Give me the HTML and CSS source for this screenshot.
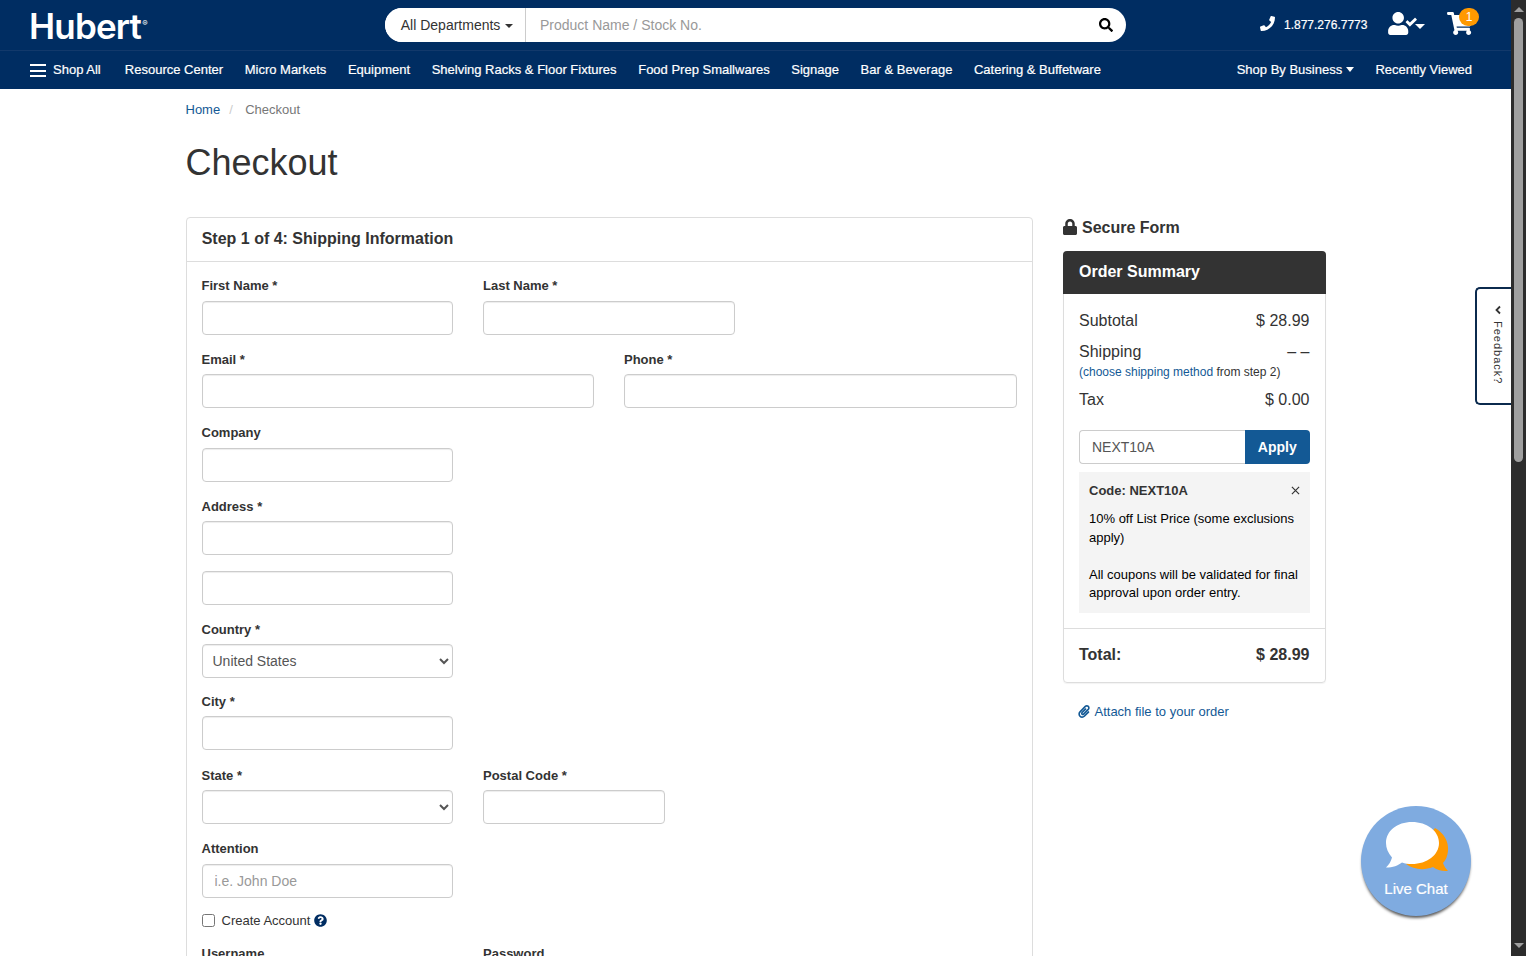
FILE: index.html
```html
<!DOCTYPE html>
<html lang="en">
<head>
    <meta charset="UTF-8">
    <meta name="viewport" content="width=device-width, initial-scale=1.0">
    <title>Checkout | Hubert</title>
    <link rel="stylesheet" href="styles.css">
</head>
<body>
    <div class="page">
        <header>
            <div class="top-bar">
                <a class="logo">Hubert<sup>&reg;</sup></a>
                <div class="search">
                    <button class="departments">All Departments <span class="caret"></span></button>
                    <input type="text" class="search-input" placeholder="Product Name / Stock No.">
                    <svg class="icon-search" viewBox="0 0 512 512"><path d="M505 442.7L405.3 343c-4.5-4.5-10.6-7-17-7H372c27.6-35.3 44-79.7 44-128C416 93.1 322.9 0 208 0S0 93.1 0 208s93.1 208 208 208c48.3 0 92.7-16.4 128-44v16.3c0 6.4 2.5 12.5 7 17l99.7 99.7c9.4 9.4 24.6 9.4 33.9 0l28.3-28.3c9.4-9.4 9.4-24.6.1-34zM208 336c-70.7 0-128-57.2-128-128 0-70.7 57.2-128 128-128 70.7 0 128 57.2 128 128 0 70.7-57.2 128-128 128z"/></svg>
                </div>
                <div class="tools">
                    <svg class="icon-phone" viewBox="0 0 512 512"><path d="M493.4 24.6l-104-24c-11.3-2.6-22.9 3.3-27.5 13.9l-48 112c-4.2 9.8-1.4 21.3 6.9 28l60.6 49.6c-36 76.7-98.9 140.5-177.2 177.2l-49.6-60.6c-6.8-8.3-18.2-11.1-28-6.9l-112 48C3.9 366.500-2 378.1.6 389.4l24 104C27.1 504.2 36.7 512 48 512c256.1 0 464-207.500 464-464 0-11.2-7.7-20.9-18.6-23.4z"/></svg>
                    <span class="phone">1.877.276.7773</span>
                    <svg class="icon-user" viewBox="0 0 640 512"><path d="M224 256c70.7 0 128-57.3 128-128S294.7 0 224 0 96 57.3 96 128s57.3 128 128 128zm89.6 32h-16.7c-22.2 10.2-46.9 16-72.9 16s-50.6-5.8-72.9-16h-16.7C60.2 288 0 348.2 0 422.4V464c0 26.5 21.5 48 48 48h352c26.5 0 48-21.5 48-48v-41.6c0-74.2-60.2-134.4-134.4-134.4z"/><path d="M636 159l-28-28c-5-5-12-5-17 0L485 236l-46-46c-5-5-12-5-17 0l-28 28c-5 5-5 12 0 17l82 83c5 5 12 5 17 0l143-142c5-5 5-12 0-17z"/></svg>
                    <span class="caret caret-user"></span>
                    <a class="cart">
                        <svg class="icon-cart" viewBox="0 0 576 512"><path d="M528.12 301.319l47.273-208C578.806 78.301 567.391 64 551.99 64H159.208l-9.166-44.81C147.758 8.021 137.93 0 126.529 0H24C10.745 0 0 10.745 0 24v16c0 13.255 10.745 24 24 24h69.883l70.248 343.435C147.325 417.1 136 435.222 136 456c0 30.928 25.072 56 56 56s56-25.072 56-56c0-15.674-6.447-29.835-16.824-40h209.647C430.447 426.165 424 440.326 424 456c0 30.928 25.072 56 56 56s56-25.072 56-56c0-22.172-12.888-41.332-31.579-50.405l5.517-24.276c3.413-15.018-8.002-29.319-23.403-29.319H218.117l-6.545-32h293.145c11.206 0 20.92-7.754 23.403-18.681z"/></svg>
                        <span class="badge">1</span>
                    </a>
                </div>
            </div>
            <nav>
                <a class="shop-all"><span class="burger"></span>Shop All</a>
                <a>Resource Center</a>
                <a>Micro Markets</a>
                <a>Equipment</a>
                <a>Shelving Racks &amp; Floor Fixtures</a>
                <a>Food Prep Smallwares</a>
                <a>Signage</a>
                <a>Bar &amp; Beverage</a>
                <a>Catering &amp; Buffetware</a>
                <a class="nav-right">Shop By Business <span class="caret caret-nav"></span></a>
                <a>Recently Viewed</a>
            </nav>
        </header>

        <div class="container">
            <div class="breadcrumb"><a>Home</a><span class="sep">/</span><span>Checkout</span></div>
            <h1>Checkout</h1>

            <div class="columns">
                <form class="panel">
                    <h2>Step 1 of 4: Shipping Information</h2>
                    <div class="panel-body">
                        <div class="row">
                            <div class="group third"><label>First Name *</label><input type="text"></div>
                            <div class="group third"><label>Last Name *</label><input type="text"></div>
                        </div>
                        <div class="row">
                            <div class="group half"><label>Email *</label><input type="text"></div>
                            <div class="group half"><label>Phone *</label><input type="text"></div>
                        </div>
                        <div class="row">
                            <div class="group third"><label>Company</label><input type="text"></div>
                        </div>
                        <div class="row">
                            <div class="group third"><label>Address *</label><input type="text"></div>
                        </div>
                        <div class="row">
                            <div class="group third"><input type="text"></div>
                        </div>
                        <div class="row row-country">
                            <div class="group third"><label>Country *</label><select><option>United States</option></select></div>
                        </div>
                        <div class="row row-city">
                            <div class="group third"><label>City *</label><input type="text"></div>
                        </div>
                        <div class="row">
                            <div class="group third"><label>State *</label><select><option></option></select></div>
                            <div class="group postal"><label>Postal Code *</label><input type="text"></div>
                        </div>
                        <div class="row">
                            <div class="group third"><label>Attention</label><input type="text" placeholder="i.e. John Doe"></div>
                        </div>
                        <div class="create">
                            <input type="checkbox" id="create"><label for="create">Create Account</label>
                            <svg class="icon-help" viewBox="0 0 512 512"><path d="M504 256c0 136.997-111.043 248-248 248S8 392.997 8 256C8 119.083 119.043 8 256 8s248 111.083 248 248zM262.655 90c-54.497 0-89.255 22.957-116.549 63.758-3.536 5.286-2.353 12.415 2.715 16.258l34.699 26.31c5.205 3.947 12.621 3.008 16.665-2.122 17.864-22.658 30.113-35.797 57.303-35.797 20.429 0 45.698 13.148 45.698 32.958 0 14.976-12.363 22.667-32.534 33.976C247.128 238.528 216 254.941 216 296v4c0 6.627 5.373 12 12 12h56c6.627 0 12-5.373 12-12v-1.333c0-28.462 83.186-29.647 83.186-106.667 0-58.002-60.165-102-116.531-102zM256 338c-25.365 0-46 20.635-46 46 0 25.364 20.635 46 46 46s46-20.636 46-46c0-25.365-20.635-46-46-46z"/></svg>
                        </div>
                        <div class="row">
                            <div class="group third"><label>Username</label><input type="text"></div>
                            <div class="group third"><label>Password</label><input type="password"></div>
                        </div>
                    </div>
                </form>

                <aside>
                    <div class="secure">
                        <svg class="icon-lock" viewBox="0 0 448 512"><path d="M400 224h-24v-72C376 68.2 307.8 0 224 0S72 68.2 72 152v72H48c-26.5 0-48 21.5-48 48v192c0 26.5 21.5 48 48 48h352c26.5 0 48-21.5 48-48V272c0-26.5-21.5-48-48-48zm-104 0H152v-72c0-39.7 32.3-72 72-72s72 32.3 72 72v72z"/></svg>
                        Secure Form
                    </div>
                    <div class="summary">
                        <h3>Order Summary</h3>
                        <div class="summary-body">
                            <div class="line"><span>Subtotal</span><span>$ 28.99</span></div>
                            <div class="line line-shipping"><span>Shipping</span><span>&ndash; &ndash;</span></div>
                            <div class="note"><a>(choose shipping method</a> from step 2)</div>
                            <div class="line"><span>Tax</span><span>$ 0.00</span></div>
                            <div class="promo">
                                <input type="text" value="NEXT10A">
                                <button>Apply</button>
                            </div>
                            <div class="coupon">
                                <div class="coupon-head"><span>Code: NEXT10A</span>
                                    <svg class="icon-close" viewBox="0 0 10 10"><path d="M1 1l8 8M9 1l-8 8"/></svg>
                                </div>
                                <p>10% off List Price (some exclusions apply)</p>
                                <p>All coupons will be validated for final approval upon order entry.</p>
                            </div>
                        </div>
                        <div class="total"><span>Total:</span><span>$ 28.99</span></div>
                    </div>
                    <a class="attach">
                        <svg class="icon-clip" viewBox="0 0 448 512"><path d="M43.246 466.142c-58.43-60.289-57.341-157.511 1.386-217.581L254.392 34c44.316-45.332 116.351-45.336 160.671 0 43.89 44.894 43.943 117.329 0 162.276L232.214 383.128c-29.855 30.537-78.633 30.111-107.982-.998-28.275-29.97-27.368-77.473 1.452-106.953l143.743-146.835c6.182-6.314 16.312-6.422 22.626-.241l22.861 22.379c6.315 6.182 6.422 16.312.241 22.626L171.427 319.927c-4.932 5.045-5.236 13.428-.648 18.292 4.372 4.634 11.245 4.711 15.688.165l182.849-186.851c19.613-20.062 19.613-52.725-.011-72.798-19.189-19.627-49.957-19.637-69.154 0L90.39 293.295c-34.763 35.56-35.299 93.12-1.191 128.313 34.01 35.093 88.985 35.137 123.058.286l172.06-175.999c6.177-6.319 16.307-6.433 22.626-.256l22.877 22.364c6.319 6.177 6.434 16.307.256 22.626l-172.06 175.998c-59.576 60.938-155.943 60.216-214.77-.485z"/></svg>
                        Attach file to your order
                    </a>
                </aside>
            </div>
        </div>

        <div class="feedback">
            <svg class="icon-chevron" viewBox="0 0 8 10"><path d="M6 1.500L2.500 5 6 8.500"/></svg>
            <span>Feedback?</span>
        </div>

        <div class="chat">
            <svg class="icon-chat" viewBox="0 0 64 52">
                <path class="bubble-back" d="M50 7c9 5 14 14 13 23-.5 5-2 9-5 12 1 3 3 6 5 8-6 .5-11-1-15-4-10 4-20 2-27-3z"/>
                <path class="bubble-front" d="M27 1c15 0 27 9 27 21S42 43 27 43c-4 0-7-.5-10-1.500-4 3-9 5-16 5 3-3 5-6 6-10C3 32 1 27 1 22 1 10 12 1 27 1z"/>
            </svg>
            <span>Live Chat</span>
        </div>
    </div>

    <div class="scrollbar">
        <span class="arrow-up"></span>
        <div class="thumb"></div>
        <span class="arrow-down"></span>
    </div>
</body>
</html>
```
FILE: styles.css
```css
* {
    box-sizing: border-box;
}
body {
    margin: 0;
    display: flex;
    height: 956px;
    overflow: hidden;
    background: #fff;
    color: #333;
    font-family: "Liberation Sans", Arial, sans-serif;
    font-size: 13px;
    line-height: 18.4px;
}
a {
    color: #135995;
    text-decoration: none;
}
svg {
    display: block;
    flex-shrink: 0;
    fill: currentColor;
}
input, select, button {
    font-family: inherit;
}
.page {
    position: relative;
    width: 1511px;
    height: 956px;
    overflow: hidden;
}

/* Header */
header {
    height: 89px;
    background: #002d62;
    color: #fff;
}
.top-bar {
    display: flex;
    align-items: center;
    height: 51px;
    padding: 0 32px 0 29px;
    border-bottom: 1px solid #12396b;
}
.logo {
    display: flex;
    width: 356px;
    padding-top: 2px;
    color: #fff;
    font-family: Inter, sans-serif;
    font-size: 35px;
    font-weight: 600;
    line-height: 40px;
    letter-spacing: -0.8px;
}
.logo sup {
    margin-left: 1px;
    font-size: 8px;
    font-weight: 400;
    line-height: 34px;
    letter-spacing: 0;
}
.search {
    display: flex;
    align-items: center;
    width: 741px;
    height: 34px;
    padding-right: 13px;
    border-radius: 17px;
    background: #fff;
    overflow: hidden;
}
.departments {
    width: 141px;
    height: 34px;
    padding: 0 0 0 4px;
    border: 0;
    border-right: 1px solid #ccc;
    background: #fff;
    color: #333;
    font-size: 14px;
}
.caret {
    display: inline-block;
    margin-left: 1px;
    border: 4px solid transparent;
    border-top-color: currentColor;
    border-bottom: 0;
    vertical-align: middle;
}
.caret-nav {
    margin: -3px 0 0;
    border-width: 5px 4.5px 0;
}
.search-input {
    flex: 1;
    padding: 0 14px;
    border: 0;
    font-size: 14px;
}
input::placeholder {
    color: #999;
}
.icon-search {
    width: 14px;
    height: 14px;
    margin-bottom: 1px;
    color: #000;
}
.tools {
    display: flex;
    align-items: center;
    margin-left: auto;
}
.icon-phone {
    width: 15px;
    height: 15px;
    margin: 0 9px 3px 0;
}
.phone {
    width: 104px;
    font-size: 12px;
    -webkit-text-stroke: 0.2px #fff;
}
.icon-user {
    width: 29px;
    height: 23px;
    margin-bottom: 3px;
}
.caret-user {
    margin: 3px 22px 0 -2px;
    border-width: 5px 5px 0;
}
.cart {
    position: relative;
    width: 32px;
    height: 24px;
    color: #fff;
}
.icon-cart {
    width: 26px;
    height: 23px;
    margin-top: -1px;
}
.badge {
    position: absolute;
    top: -5px;
    right: 0;
    width: 20px;
    height: 18px;
    border-radius: 9px;
    background: #f90;
    font-size: 12px;
    line-height: 18px;
    text-align: center;
}
nav {
    display: flex;
    align-items: center;
    gap: 21.6px;
    height: 38px;
    padding: 1px 39px 0 30px;
}
nav a {
    color: #fff;
    white-space: nowrap;
    -webkit-text-stroke: 0.2px #fff;
}
.shop-all {
    display: flex;
    align-items: center;
    margin-right: 2.5px;
}
.burger {
    width: 16px;
    height: 13px;
    margin-right: 7px;
    border-top: 2px solid #fff;
    border-bottom: 2px solid #fff;
    background: linear-gradient(#fff, #fff) center / 16px 2px no-repeat;
}
.nav-right {
    margin-left: auto;
}

/* Checkout */
.container {
    width: 1140px;
    margin: 0 auto;
}
.breadcrumb {
    display: flex;
    padding-top: 12px;
    color: #777;
}
.sep {
    width: 25px;
    padding-left: 9px;
    color: #ccc;
}
h1 {
    margin: 23px 0 34px;
    font-size: 36px;
    font-weight: 400;
    line-height: 41px;
}
.columns {
    display: flex;
    gap: 30px;
    align-items: flex-start;
}
.panel {
    width: 847.5px;
    border: 1px solid #ddd;
    border-radius: 4px;
}
.panel h2 {
    height: 44px;
    margin: 0;
    padding: 12px 15.2px 0;
    border-bottom: 1px solid #ddd;
    font-size: 16px;
    line-height: 18px;
}
.panel-body {
    padding: 15px;
}
.row {
    display: flex;
    gap: 30px;
    margin-bottom: 16px;
}
.row-country {
    margin-bottom: 14.4px;
}
.row-city {
    margin-bottom: 16.6px;
}
.third {
    width: 251.5px;
}
.half {
    width: 392.5px;
}
.postal {
    width: 182px;
}
.group label {
    display: block;
    margin-bottom: 5px;
    font-weight: bold;
}
.group input, .group select {
    display: block;
    width: 100%;
    height: 34px;
    padding: 6px 12px;
    border: 1px solid #ccc;
    border-radius: 4px;
    background: #fff;
    box-shadow: inset 0 1px 1px rgba(0, 0, 0, 0.075);
    color: #555;
    font-size: 14px;
}
.group select {
    padding: 6px;
}
.create {
    display: flex;
    align-items: center;
    height: 18px;
    margin: -1.2px 0 15px;
}
.create input {
    width: 13px;
    height: 13px;
    margin: 0 7px 2px 0;
}
.icon-help {
    width: 13px;
    height: 13px;
    margin: 0 0 2px 4px;
    color: #002d62;
}

/* Order summary */
aside {
    width: 262.5px;
}
.secure {
    display: flex;
    align-items: center;
    gap: 5px;
    height: 20px;
    margin: 1px 0 13px;
    font-size: 16px;
    font-weight: bold;
}
.icon-lock {
    width: 14px;
    height: 16px;
    margin-bottom: 2px;
}
.summary {
    border: 1px solid #ddd;
    border-radius: 4px;
    box-shadow: 0 1px 1px rgba(0, 0, 0, 0.05);
}
.summary h3 {
    height: 43px;
    margin: -1px -1px 0;
    padding: 12px 16px;
    border-radius: 4px 4px 0 0;
    background: #333;
    color: #fff;
    font-size: 16px;
}
.summary-body {
    padding: 17px 15px 15px;
}
.line {
    display: flex;
    justify-content: space-between;
    height: 20px;
    font-size: 16px;
    line-height: 20px;
}
.line-shipping {
    margin-top: 11px;
}
.note {
    height: 17px;
    margin-bottom: 11px;
    font-size: 12px;
    line-height: 20px;
}
.promo {
    display: flex;
    margin: 20px 0 8px;
}
.promo input {
    width: 166px;
    height: 34px;
    padding: 6px 12px;
    border: 1px solid #ccc;
    border-right: 0;
    border-radius: 4px 0 0 4px;
    color: #555;
    font-size: 14px;
}
.promo button {
    flex: 1;
    padding: 0;
    border: 0;
    border-radius: 0 4px 4px 0;
    background: #135995;
    color: #fff;
    font-size: 14px;
    font-weight: bold;
}
.coupon {
    height: 141px;
    padding: 9.5px 10px;
    background: #f4f4f4;
    color: #000;
}
.coupon-head {
    display: flex;
    align-items: center;
    justify-content: space-between;
    margin-bottom: 10px;
    color: #333;
    font-weight: bold;
}
.icon-close {
    width: 9px;
    height: 9px;
    margin-bottom: 2px;
    stroke: #333;
    stroke-width: 1.3;
}
.coupon p {
    margin: 0 -4px 18.4px 0;
}
.total {
    display: flex;
    justify-content: space-between;
    height: 54px;
    padding: 17px 15px;
    border-top: 1px solid #ddd;
    font-size: 16px;
    font-weight: bold;
}
.attach {
    display: flex;
    align-items: center;
    gap: 5px;
    margin: 20px 0 0 14.5px;
}
.icon-clip {
    width: 12px;
    height: 13px;
    margin-bottom: 2px;
}

/* Floating widgets */
.feedback {
    position: absolute;
    top: 287px;
    right: 0;
    display: flex;
    flex-direction: column;
    align-items: center;
    gap: 6px;
    width: 36px;
    height: 118px;
    padding: 16px 0 0 7px;
    border: 2px solid #0b2a4e;
    border-right: 0;
    border-radius: 5px 0 0 5px;
    background: #fff;
}
.feedback span {
    writing-mode: vertical-rl;
    font-size: 11px;
    line-height: 14px;
    letter-spacing: 1px;
}
.icon-chevron {
    width: 8px;
    height: 10px;
    fill: none;
    stroke: #333;
    stroke-width: 1.8;
}
.chat {
    position: absolute;
    top: 806px;
    left: 1361px;
    display: flex;
    flex-direction: column;
    align-items: center;
    width: 110px;
    height: 110px;
    padding-top: 15px;
    border-radius: 50%;
    background: #7fabe0;
    box-shadow: 0 3px 3px -1px rgba(0, 0, 0, 0.65);
    color: #fff;
    font-size: 15px;
}
.icon-chat {
    width: 64px;
    height: 52px;
    margin-left: 2px;
}
.chat span {
    margin-top: 7px;
    -webkit-text-stroke: 0.2px #fff;
}
.bubble-back {
    fill: #f90;
}

/* Scrollbar */
.scrollbar {
    display: flex;
    flex-direction: column;
    align-items: center;
    width: 15px;
    height: 956px;
    padding: 7px 0 8px;
    background: #2c2c2c;
}
.thumb {
    width: 9px;
    height: 444px;
    margin-top: 6px;
    border-radius: 5px;
    background: #9f9f9f;
}
.arrow-up, .arrow-down {
    border: 5px solid transparent;
}
.arrow-up {
    border-top: 0;
    border-bottom-color: #9f9f9f;
}
.arrow-down {
    margin-top: auto;
    border-bottom: 0;
    border-top-color: #9f9f9f;
}
```
